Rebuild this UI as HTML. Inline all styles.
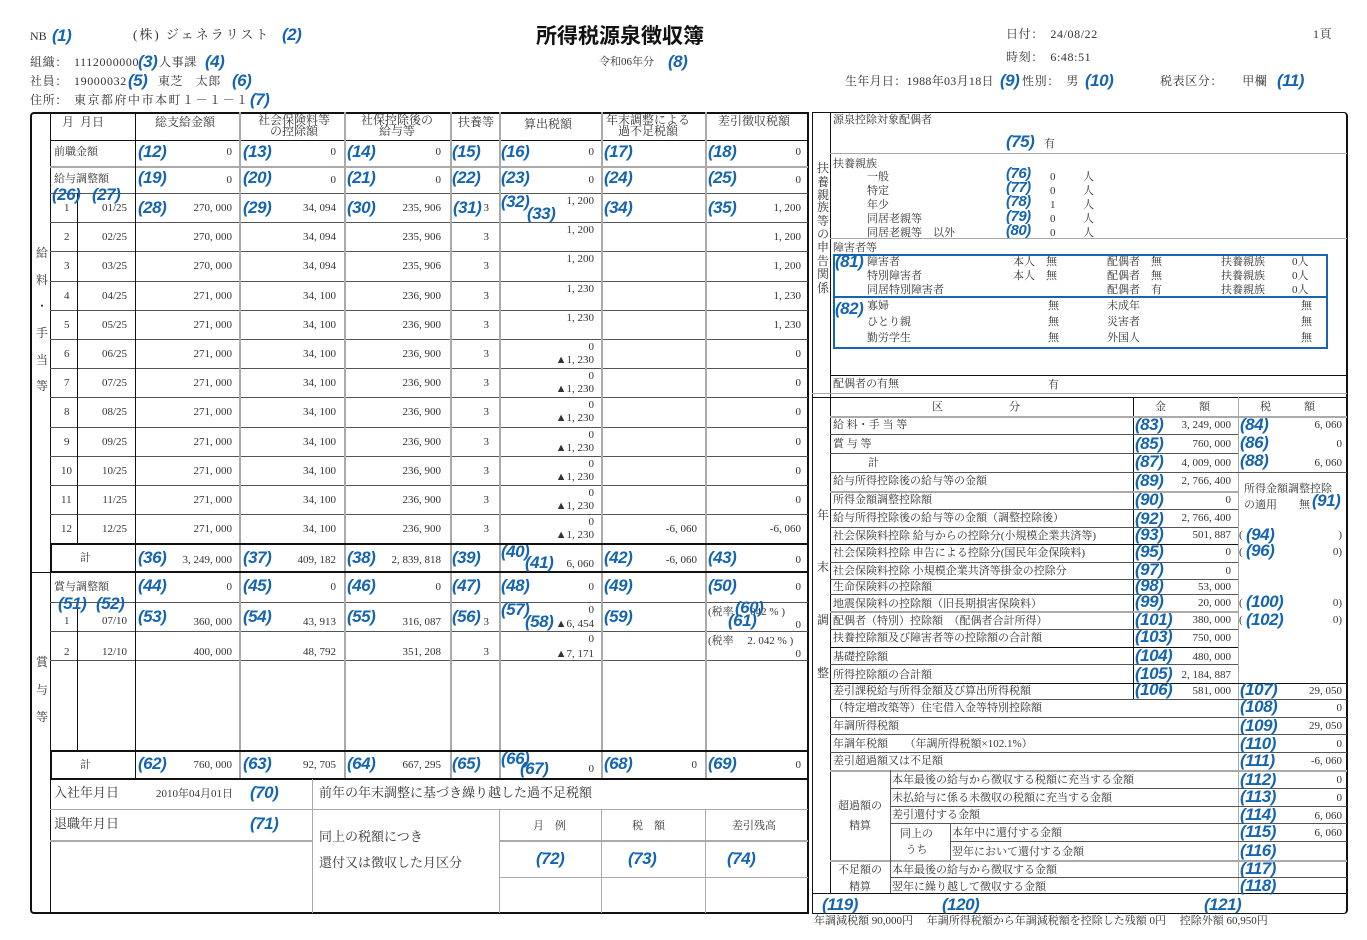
<!DOCTYPE html>
<html><head><meta charset="utf-8">
<style>
html,body{margin:0;padding:0;background:#fff}
body{width:1367px;height:940px;position:relative;overflow:hidden;font:11px/14px "Liberation Serif","Noto Serif CJK SC",serif;color:#333}
.a{position:absolute;white-space:nowrap;line-height:14px}
.b{position:absolute;white-space:nowrap;font:italic bold 17px/20px "Liberation Sans",sans-serif;color:#1565b0;letter-spacing:-0.5px}
.bs{font-size:15px;line-height:15px}
.h{position:absolute;height:1px;background:#555}
.v{position:absolute;width:1px;background:#555}
.g{background:#aaa}
.k{background:#111}
.row{position:absolute;left:0;width:1367px;height:29px}
.box{position:absolute;box-sizing:border-box}
.vt{position:absolute;width:14px;text-align:center;font-size:12px}
.hd{font-size:12px;letter-spacing:0.6px}
</style></head><body>

<!-- header -->
<span class="a" style="left:30px;top:29px;font-size:12px">NB</span><span class="b" style="left:52px;top:26px">(1)</span>
<span class="a" style="left:133px;top:28px;font-size:13px;letter-spacing:2px">(株) ジェネラリスト</span><span class="b" style="left:282px;top:25px">(2)</span>
<span class="a" style="left:536px;top:22px;font:bold 21px/26px 'Noto Sans CJK JP',sans-serif;color:#111">所得税源泉徴収簿</span>
<span class="a" style="left:599px;top:55px">令和06年分</span><span class="b" style="left:668px;top:52px">(8)</span>
<span class="a hd" style="left:1006px;top:27px">日付：　24/08/22</span>
<span class="a hd" style="left:1313px;top:27px">1頁</span>
<span class="a hd" style="left:1006px;top:50px">時刻：　6:48:51</span>
<span class="a hd" style="left:30px;top:55px">組織：</span><span class="a hd" style="left:74px;top:55px">1112000000</span><span class="b" style="left:138px;top:52px">(3)</span><span class="a hd" style="left:159px;top:55px">人事課</span><span class="b" style="left:205px;top:52px">(4)</span>
<span class="a hd" style="left:30px;top:74px">社員：</span><span class="a hd" style="left:74px;top:74px">19000032</span><span class="b" style="left:128px;top:71px">(5)</span><span class="a hd" style="left:158px;top:74px">東芝　太郎</span><span class="b" style="left:232px;top:71px">(6)</span>
<span class="a hd" style="left:30px;top:93px">住所：</span><span class="a hd" style="left:74px;top:93px;letter-spacing:1.5px">東京都府中市本町１－１－１</span><span class="b" style="left:250px;top:90px">(7)</span>
<span class="a hd" style="left:845px;top:74px;letter-spacing:0.3px">生年月日：1988年03月18日</span><span class="b" style="left:1000px;top:71px">(9)</span><span class="a hd" style="left:1022px;top:74px">性別：　男</span><span class="b" style="left:1085px;top:71px">(10)</span>
<span class="a hd" style="left:1160px;top:74px">税表区分：　　甲欄</span><span class="b" style="left:1277px;top:71px">(11)</span>

<!-- LEFT TABLE frame -->
<div class="box" style="left:30px;top:112px;width:779px;height:802px;border:2px solid #111;border-radius:4px 0 0 4px"></div>
<div class="v k" style="left:50px;top:112px;height:801px"></div>
<div class="h k" style="left:30px;top:572px;width:20px"></div>
<div class="h k" style="left:50px;top:140px;width:758px"></div>
<div class="h g" style="left:50px;top:166px;width:758px;height:2px"></div>
<div class="h" style="left:50px;top:193px;width:758px"></div>
<div class="h" style="left:50px;top:222px;width:758px"></div>
<div class="h" style="left:50px;top:251px;width:758px"></div>
<div class="h" style="left:50px;top:281px;width:758px"></div>
<div class="h" style="left:50px;top:310px;width:758px"></div>
<div class="h" style="left:50px;top:339px;width:758px"></div>
<div class="h" style="left:50px;top:368px;width:758px"></div>
<div class="h" style="left:50px;top:397px;width:758px"></div>
<div class="h" style="left:50px;top:427px;width:758px"></div>
<div class="h" style="left:50px;top:456px;width:758px"></div>
<div class="h" style="left:50px;top:485px;width:758px"></div>
<div class="h" style="left:50px;top:514px;width:758px"></div>
<div class="h" style="left:50px;top:602px;width:758px"></div>
<div class="h" style="left:50px;top:631px;width:758px"></div>
<div class="h" style="left:50px;top:660px;width:758px"></div>
<div class="v k" style="left:135px;top:112px;height:667px"></div>
<div class="v g" style="left:239px;top:112px;height:667px;width:2px"></div>
<div class="v g" style="left:344px;top:112px;height:667px;width:2px"></div>
<div class="v g" style="left:450px;top:112px;height:667px;width:2px"></div>
<div class="v g" style="left:499px;top:112px;height:667px;width:2px"></div>
<div class="v g" style="left:601px;top:112px;height:667px;width:2px"></div>
<div class="v g" style="left:705px;top:112px;height:667px;width:2px"></div>
<div class="v k" style="left:77px;top:193px;height:350px"></div>
<div class="v k" style="left:77px;top:602px;height:148px"></div>
<div class="box" style="left:50px;top:543px;width:759px;height:30px;border:2px solid #111"></div>
<div class="box" style="left:50px;top:750px;width:759px;height:30px;border:2px solid #111"></div>
<div class="h g" style="left:50px;top:809px;width:758px"></div>
<div class="h g" style="left:50px;top:840px;width:262px;height:2px"></div>
<div class="v g" style="left:312px;top:779px;height:134px"></div>
<div class="v g" style="left:499px;top:809px;height:104px"></div>
<div class="v g" style="left:601px;top:809px;height:104px"></div>
<div class="v g" style="left:705px;top:809px;height:104px"></div>
<div class="h g" style="left:499px;top:840px;width:309px;height:2px"></div>
<div class="h g" style="left:499px;top:877px;width:309px"></div>

<!-- vertical labels -->
<span class="vt" style="left:35px;top:246px">給</span>
<span class="vt" style="left:35px;top:273px">料</span>
<span class="vt" style="left:35px;top:299px">・</span>
<span class="vt" style="left:35px;top:326px">手</span>
<span class="vt" style="left:35px;top:353px">当</span>
<span class="vt" style="left:35px;top:379px">等</span>
<span class="vt" style="left:35px;top:655px">賞</span>
<span class="vt" style="left:35px;top:683px">与</span>
<span class="vt" style="left:35px;top:710px">等</span>

<!-- column headers -->
<span class="a" style="left:62px;top:115px;font-size:12px">月&nbsp; 月日</span>
<span class="a" style="left:155px;top:115px;font-size:12px">総支給金額</span>
<span class="a" style="left:258px;top:115px;font-size:12px;line-height:11px;text-align:center">社会保険料等<br>の控除額</span>
<span class="a" style="left:361px;top:115px;font-size:12px;line-height:11px;text-align:center">社保控除後の<br>給与等</span>
<span class="a" style="left:458px;top:115px;font-size:12px">扶養等</span>
<span class="a" style="left:524px;top:117px;font-size:12px">算出税額</span>
<span class="a" style="left:606px;top:115px;font-size:12px;line-height:11px;text-align:center">年末調整による<br>過不足税額</span>
<span class="a" style="left:718px;top:114px;font-size:12px">差引徴収税額</span>

<!-- 前職 / 給与調整 -->
<span class="a" style="left:54px;top:145px">前職金額</span>
<span class="b" style="left:138px;top:142px">(12)</span><span class="a" style="right:1135px;top:145px">0</span>
<span class="b" style="left:243px;top:142px">(13)</span><span class="a" style="right:1031px;top:145px">0</span>
<span class="b" style="left:347px;top:142px">(14)</span><span class="a" style="right:926px;top:145px">0</span>
<span class="b" style="left:452px;top:142px">(15)</span>
<span class="b" style="left:501px;top:142px">(16)</span><span class="a" style="right:773px;top:145px">0</span>
<span class="b" style="left:604px;top:142px">(17)</span>
<span class="b" style="left:708px;top:142px">(18)</span><span class="a" style="right:566px;top:145px">0</span>
<span class="a" style="left:54px;top:172px">給与調整額</span>
<span class="b" style="left:138px;top:168px">(19)</span><span class="a" style="right:1135px;top:173px">0</span>
<span class="b" style="left:243px;top:168px">(20)</span><span class="a" style="right:1031px;top:173px">0</span>
<span class="b" style="left:347px;top:168px">(21)</span><span class="a" style="right:926px;top:173px">0</span>
<span class="b" style="left:452px;top:168px">(22)</span>
<span class="b" style="left:501px;top:168px">(23)</span><span class="a" style="right:773px;top:173px">0</span>
<span class="b" style="left:604px;top:168px">(24)</span>
<span class="b" style="left:708px;top:168px">(25)</span><span class="a" style="right:566px;top:173px">0</span>

<!-- monthly rows -->
<div class="row" style="top:193px">
<span class="a" style="left:64px;top:8px">1</span><span class="a" style="right:1240px;top:8px">01/25</span>
<span class="a" style="right:1135px;top:8px">270, 000</span><span class="a" style="right:1031px;top:8px">34, 094</span><span class="a" style="right:926px;top:8px">235, 906</span><span class="a" style="right:878px;top:8px">3</span>
<span class="a" style="right:773px;top:1px">1, 200</span><span class="a" style="right:566px;top:8px">1, 200</span>
<span class="b" style="left:52px;top:-8px">(26)</span><span class="b" style="left:92px;top:-8px">(27)</span>
<span class="b" style="left:138px;top:5px">(28)</span><span class="b" style="left:243px;top:5px">(29)</span><span class="b" style="left:347px;top:5px">(30)</span><span class="b" style="left:453px;top:5px">(31)</span>
<span class="b" style="left:501px;top:-1px">(32)</span><span class="b" style="left:527px;top:11px">(33)</span><span class="b" style="left:604px;top:5px">(34)</span><span class="b" style="left:708px;top:5px">(35)</span>
</div>
<div class="row" style="top:222px">
<span class="a" style="left:64px;top:8px">2</span><span class="a" style="right:1240px;top:8px">02/25</span>
<span class="a" style="right:1135px;top:8px">270, 000</span><span class="a" style="right:1031px;top:8px">34, 094</span><span class="a" style="right:926px;top:8px">235, 906</span><span class="a" style="right:878px;top:8px">3</span>
<span class="a" style="right:773px;top:1px">1, 200</span><span class="a" style="right:566px;top:8px">1, 200</span></div>
<div class="row" style="top:251px">
<span class="a" style="left:64px;top:8px">3</span><span class="a" style="right:1240px;top:8px">03/25</span>
<span class="a" style="right:1135px;top:8px">270, 000</span><span class="a" style="right:1031px;top:8px">34, 094</span><span class="a" style="right:926px;top:8px">235, 906</span><span class="a" style="right:878px;top:8px">3</span>
<span class="a" style="right:773px;top:1px">1, 200</span><span class="a" style="right:566px;top:8px">1, 200</span></div>
<div class="row" style="top:281px">
<span class="a" style="left:64px;top:8px">4</span><span class="a" style="right:1240px;top:8px">04/25</span>
<span class="a" style="right:1135px;top:8px">271, 000</span><span class="a" style="right:1031px;top:8px">34, 100</span><span class="a" style="right:926px;top:8px">236, 900</span><span class="a" style="right:878px;top:8px">3</span>
<span class="a" style="right:773px;top:1px">1, 230</span><span class="a" style="right:566px;top:8px">1, 230</span></div>
<div class="row" style="top:310px">
<span class="a" style="left:64px;top:8px">5</span><span class="a" style="right:1240px;top:8px">05/25</span>
<span class="a" style="right:1135px;top:8px">271, 000</span><span class="a" style="right:1031px;top:8px">34, 100</span><span class="a" style="right:926px;top:8px">236, 900</span><span class="a" style="right:878px;top:8px">3</span>
<span class="a" style="right:773px;top:1px">1, 230</span><span class="a" style="right:566px;top:8px">1, 230</span></div>
<div class="row" style="top:339px">
<span class="a" style="left:64px;top:8px">6</span><span class="a" style="right:1240px;top:8px">06/25</span>
<span class="a" style="right:1135px;top:8px">271, 000</span><span class="a" style="right:1031px;top:8px">34, 100</span><span class="a" style="right:926px;top:8px">236, 900</span><span class="a" style="right:878px;top:8px">3</span>
<span class="a" style="right:773px;top:1px">0</span><span class="a" style="right:773px;top:14px">▲1, 230</span><span class="a" style="right:566px;top:8px">0</span></div>
<div class="row" style="top:368px">
<span class="a" style="left:64px;top:8px">7</span><span class="a" style="right:1240px;top:8px">07/25</span>
<span class="a" style="right:1135px;top:8px">271, 000</span><span class="a" style="right:1031px;top:8px">34, 100</span><span class="a" style="right:926px;top:8px">236, 900</span><span class="a" style="right:878px;top:8px">3</span>
<span class="a" style="right:773px;top:1px">0</span><span class="a" style="right:773px;top:14px">▲1, 230</span><span class="a" style="right:566px;top:8px">0</span></div>
<div class="row" style="top:397px">
<span class="a" style="left:64px;top:8px">8</span><span class="a" style="right:1240px;top:8px">08/25</span>
<span class="a" style="right:1135px;top:8px">271, 000</span><span class="a" style="right:1031px;top:8px">34, 100</span><span class="a" style="right:926px;top:8px">236, 900</span><span class="a" style="right:878px;top:8px">3</span>
<span class="a" style="right:773px;top:1px">0</span><span class="a" style="right:773px;top:14px">▲1, 230</span><span class="a" style="right:566px;top:8px">0</span></div>
<div class="row" style="top:427px">
<span class="a" style="left:64px;top:8px">9</span><span class="a" style="right:1240px;top:8px">09/25</span>
<span class="a" style="right:1135px;top:8px">271, 000</span><span class="a" style="right:1031px;top:8px">34, 100</span><span class="a" style="right:926px;top:8px">236, 900</span><span class="a" style="right:878px;top:8px">3</span>
<span class="a" style="right:773px;top:1px">0</span><span class="a" style="right:773px;top:14px">▲1, 230</span><span class="a" style="right:566px;top:8px">0</span></div>
<div class="row" style="top:456px">
<span class="a" style="left:61px;top:8px">10</span><span class="a" style="right:1240px;top:8px">10/25</span>
<span class="a" style="right:1135px;top:8px">271, 000</span><span class="a" style="right:1031px;top:8px">34, 100</span><span class="a" style="right:926px;top:8px">236, 900</span><span class="a" style="right:878px;top:8px">3</span>
<span class="a" style="right:773px;top:1px">0</span><span class="a" style="right:773px;top:14px">▲1, 230</span><span class="a" style="right:566px;top:8px">0</span></div>
<div class="row" style="top:485px">
<span class="a" style="left:61px;top:8px">11</span><span class="a" style="right:1240px;top:8px">11/25</span>
<span class="a" style="right:1135px;top:8px">271, 000</span><span class="a" style="right:1031px;top:8px">34, 100</span><span class="a" style="right:926px;top:8px">236, 900</span><span class="a" style="right:878px;top:8px">3</span>
<span class="a" style="right:773px;top:1px">0</span><span class="a" style="right:773px;top:14px">▲1, 230</span><span class="a" style="right:566px;top:8px">0</span></div>
<div class="row" style="top:514px">
<span class="a" style="left:61px;top:8px">12</span><span class="a" style="right:1240px;top:8px">12/25</span>
<span class="a" style="right:1135px;top:8px">271, 000</span><span class="a" style="right:1031px;top:8px">34, 100</span><span class="a" style="right:926px;top:8px">236, 900</span><span class="a" style="right:878px;top:8px">3</span>
<span class="a" style="right:773px;top:1px">0</span><span class="a" style="right:773px;top:14px">▲1, 230</span><span class="a" style="right:670px;top:8px">-6, 060</span><span class="a" style="right:566px;top:8px">-6, 060</span></div>

<!-- 計 -->
<span class="a" style="left:80px;top:551px">計</span>
<span class="b" style="left:138px;top:548px">(36)</span><span class="a" style="right:1135px;top:553px">3, 249, 000</span>
<span class="b" style="left:243px;top:548px">(37)</span><span class="a" style="right:1031px;top:553px">409, 182</span>
<span class="b" style="left:347px;top:548px">(38)</span><span class="a" style="right:926px;top:553px">2, 839, 818</span>
<span class="b" style="left:452px;top:548px">(39)</span>
<span class="b" style="left:501px;top:542px">(40)</span><span class="b" style="left:525px;top:553px">(41)</span><span class="a" style="right:773px;top:557px">6, 060</span>
<span class="b" style="left:604px;top:548px">(42)</span><span class="a" style="right:670px;top:553px">-6, 060</span>
<span class="b" style="left:708px;top:548px">(43)</span><span class="a" style="right:566px;top:553px">0</span>

<!-- 賞与 -->
<span class="a" style="left:54px;top:580px">賞与調整額</span>
<span class="b" style="left:138px;top:576px">(44)</span><span class="a" style="right:1135px;top:580px">0</span>
<span class="b" style="left:243px;top:576px">(45)</span><span class="a" style="right:1031px;top:580px">0</span>
<span class="b" style="left:347px;top:576px">(46)</span><span class="a" style="right:926px;top:580px">0</span>
<span class="b" style="left:452px;top:576px">(47)</span>
<span class="b" style="left:501px;top:576px">(48)</span><span class="a" style="right:773px;top:580px">0</span>
<span class="b" style="left:604px;top:576px">(49)</span>
<span class="b" style="left:708px;top:576px">(50)</span><span class="a" style="right:566px;top:580px">0</span>
<span class="b" style="left:58px;top:594px">(51)</span><span class="b" style="left:96px;top:594px">(52)</span>
<span class="a" style="left:64px;top:614px">1</span><span class="a" style="right:1240px;top:614px">07/10</span>
<span class="b" style="left:138px;top:607px">(53)</span><span class="a" style="right:1135px;top:615px">360, 000</span>
<span class="b" style="left:243px;top:607px">(54)</span><span class="a" style="right:1031px;top:615px">43, 913</span>
<span class="b" style="left:347px;top:607px">(55)</span><span class="a" style="right:926px;top:615px">316, 087</span>
<span class="b" style="left:452px;top:607px">(56)</span><span class="a" style="right:878px;top:615px">3</span>
<span class="b" style="left:501px;top:600px">(57)</span><span class="b" style="left:525px;top:612px">(58)</span><span class="a" style="right:773px;top:603px">0</span><span class="a" style="right:773px;top:617px">▲6, 454</span>
<span class="b" style="left:604px;top:607px">(59)</span>
<span class="a" style="left:708px;top:605px">(税率&nbsp;&nbsp;&nbsp;&nbsp;&nbsp;&nbsp;042 % )</span><span class="b" style="left:735px;top:598px">(60)</span><span class="b" style="left:728px;top:611px">(61)</span><span class="a" style="right:566px;top:618px">0</span>
<span class="a" style="left:64px;top:645px">2</span><span class="a" style="right:1240px;top:645px">12/10</span>
<span class="a" style="right:1135px;top:645px">400, 000</span><span class="a" style="right:1031px;top:645px">48, 792</span><span class="a" style="right:926px;top:645px">351, 208</span><span class="a" style="right:878px;top:645px">3</span>
<span class="a" style="right:773px;top:632px">0</span><span class="a" style="right:773px;top:647px">▲7, 171</span>
<span class="a" style="left:708px;top:634px">(税率　 2. 042 % )</span><span class="a" style="right:566px;top:647px">0</span>

<!-- 賞与計 -->
<span class="a" style="left:80px;top:758px">計</span>
<span class="b" style="left:138px;top:754px">(62)</span><span class="a" style="right:1135px;top:758px">760, 000</span>
<span class="b" style="left:243px;top:754px">(63)</span><span class="a" style="right:1031px;top:758px">92, 705</span>
<span class="b" style="left:347px;top:754px">(64)</span><span class="a" style="right:926px;top:758px">667, 295</span>
<span class="b" style="left:452px;top:754px">(65)</span>
<span class="b" style="left:501px;top:749px">(66)</span><span class="b" style="left:520px;top:759px">(67)</span><span class="a" style="right:773px;top:762px">0</span>
<span class="b" style="left:604px;top:754px">(68)</span><span class="a" style="right:670px;top:758px">0</span>
<span class="b" style="left:708px;top:754px">(69)</span><span class="a" style="right:566px;top:758px">0</span>

<!-- bottom left -->
<span class="a" style="left:54px;top:786px;font-size:13px">入社年月日</span><span class="a" style="left:156px;top:787px">2010年04月01日</span><span class="b" style="left:250px;top:783px">(70)</span>
<span class="a" style="left:319px;top:786px;font-size:13px">前年の年末調整に基づき繰り越した過不足税額</span>
<span class="a" style="left:54px;top:817px;font-size:13px">退職年月日</span><span class="b" style="left:250px;top:814px">(71)</span>
<span class="a" style="left:319px;top:830px;font-size:13px">同上の税額につき</span>
<span class="a" style="left:319px;top:856px;font-size:13px">還付又は徴収した月区分</span>
<span class="a" style="left:533px;top:819px">月　例</span>
<span class="a" style="left:632px;top:819px">税　額</span>
<span class="a" style="left:732px;top:819px">差引残高</span>
<span class="b" style="left:536px;top:849px">(72)</span><span class="b" style="left:628px;top:849px">(73)</span><span class="b" style="left:727px;top:849px">(74)</span>

<!-- RIGHT PANEL -->
<div class="box" style="left:812px;top:112px;width:536px;height:802px;border:1px solid #111;border-right-width:2px;border-radius:0 4px 4px 0"></div>
<div class="v k" style="left:830px;top:112px;height:781px"></div>
<div class="h g" style="left:830px;top:153px;width:517px"></div>
<div class="h g" style="left:830px;top:238px;width:517px"></div>
<div class="h k" style="left:830px;top:375px;width:517px"></div>
<div class="h g" style="left:812px;top:393px;width:535px"></div>
<div class="h k" style="left:812px;top:397px;width:535px"></div>

<span class="vt" style="left:816px;top:161px">扶</span><span class="vt" style="left:816px;top:175px">養</span><span class="vt" style="left:816px;top:188px">親</span><span class="vt" style="left:816px;top:200px">族</span><span class="vt" style="left:816px;top:214px">等</span><span class="vt" style="left:816px;top:227px">の</span><span class="vt" style="left:816px;top:240px">申</span><span class="vt" style="left:816px;top:254px">告</span><span class="vt" style="left:816px;top:267px">関</span><span class="vt" style="left:816px;top:281px">係</span>

<span class="a" style="left:833px;top:113px">源泉控除対象配偶者</span>
<span class="b" style="left:1006px;top:132px">(75)</span><span class="a" style="left:1044px;top:137px">有</span>
<span class="a" style="left:833px;top:157px">扶養親族</span>
<span class="a" style="left:867px;top:170px;line-height:14px">一般<br>特定<br>年少<br>同居老親等<br>同居老親等　以外</span>
<span class="a" style="left:1050px;top:170px;line-height:14px">0<br>0<br>1<br>0<br>0</span>
<span class="a" style="left:1083px;top:170px;line-height:14px">人<br>人<br>人<br>人<br>人</span>
<span class="b bs" style="left:1006px;top:166px">(76)</span><span class="b bs" style="left:1006px;top:180px">(77)</span><span class="b bs" style="left:1006px;top:194px">(78)</span><span class="b bs" style="left:1006px;top:209px">(79)</span><span class="b bs" style="left:1006px;top:223px">(80)</span>
<span class="a" style="left:833px;top:241px">障害者等</span>
<div class="box" style="left:833px;top:254px;width:495px;height:44px;border:2px solid #1565b0"></div>
<div class="box" style="left:833px;top:296px;width:495px;height:53px;border:2px solid #1565b0"></div>
<span class="b" style="left:835px;top:252px">(81)</span><span class="b" style="left:835px;top:299px">(82)</span>
<span class="a" style="left:867px;top:255px;line-height:14px">障害者<br>特別障害者<br>同居特別障害者</span>
<span class="a" style="left:1013px;top:255px;line-height:14px">本人　無<br>本人　無</span>
<span class="a" style="left:1107px;top:255px;line-height:14px">配偶者　無<br>配偶者　無<br>配偶者　有</span>
<span class="a" style="left:1221px;top:255px;line-height:14px">扶養親族<br>扶養親族<br>扶養親族</span>
<span class="a" style="left:1292px;top:255px;line-height:14px">0人<br>0人<br>0人</span>
<span class="a" style="left:867px;top:298px;line-height:16px">寡婦<br>ひとり親<br>勤労学生</span>
<span class="a" style="left:1048px;top:298px;line-height:16px">無<br>無<br>無</span>
<span class="a" style="left:1107px;top:298px;line-height:16px">未成年<br>災害者<br>外国人</span>
<span class="a" style="left:1301px;top:298px;line-height:16px">無<br>無<br>無</span>
<span class="a" style="left:833px;top:377px">配偶者の有無</span><span class="a" style="left:1048px;top:378px">有</span>

<!-- year-end table lines -->
<div class="v k" style="left:1133px;top:397px;height:302px"></div>
<div class="v g" style="left:1238px;top:397px;height:496px"></div>
<div class="h g" style="left:830px;top:416px;width:517px;height:2px"></div>
<div class="h" style="left:830px;top:434px;width:408px"></div>
<div class="h" style="left:830px;top:453px;width:408px"></div>
<div class="h" style="left:830px;top:472px;width:517px"></div>
<div class="h g" style="left:830px;top:491px;width:408px;height:2px"></div>
<div class="h" style="left:830px;top:509px;width:408px"></div>
<div class="h" style="left:830px;top:527px;width:408px"></div>
<div class="h k" style="left:830px;top:544px;width:408px"></div>
<div class="h" style="left:830px;top:562px;width:408px"></div>
<div class="h" style="left:830px;top:579px;width:408px"></div>
<div class="h" style="left:830px;top:594px;width:408px"></div>
<div class="h g" style="left:830px;top:611px;width:408px;height:2px"></div>
<div class="h" style="left:830px;top:629px;width:408px"></div>
<div class="h k" style="left:830px;top:647px;width:408px"></div>
<div class="h" style="left:830px;top:664px;width:408px"></div>
<div class="h k" style="left:830px;top:683px;width:517px"></div>
<div class="h" style="left:830px;top:699px;width:517px"></div>
<div class="h" style="left:830px;top:717px;width:517px"></div>
<div class="h" style="left:830px;top:734px;width:517px"></div>
<div class="h" style="left:830px;top:752px;width:517px"></div>
<div class="h g" style="left:830px;top:770px;width:517px;height:2px"></div>
<div class="h" style="left:890px;top:788px;width:457px"></div>
<div class="h" style="left:890px;top:806px;width:457px"></div>
<div class="h" style="left:890px;top:823px;width:457px"></div>
<div class="h" style="left:950px;top:841px;width:397px"></div>
<div class="h g" style="left:830px;top:860px;width:517px;height:2px"></div>
<div class="h" style="left:890px;top:877px;width:457px"></div>
<div class="h k" style="left:812px;top:893px;width:535px"></div>
<div class="v" style="left:890px;top:770px;height:123px"></div>
<div class="v" style="left:950px;top:823px;height:37px"></div>

<span class="vt" style="left:816px;top:508px">年</span><span class="vt" style="left:816px;top:560px">末</span><span class="vt" style="left:816px;top:613px">調</span><span class="vt" style="left:816px;top:666px">整</span>

<span class="a" style="left:932px;top:400px">区　　　　　　分</span>
<span class="a" style="left:1155px;top:400px">金　　　額</span>
<span class="a" style="left:1260px;top:400px">税　　　額</span>

<span class="a" style="left:833px;top:418px">給 料・手 当 等</span>
<span class="a" style="left:833px;top:437px">賞 与 等</span>
<span class="a" style="left:868px;top:456px">計</span>
<span class="a" style="left:833px;top:474px">給与所得控除後の給与等の金額</span>
<span class="a" style="left:833px;top:493px">所得金額調整控除額</span>
<span class="a" style="left:833px;top:511px">給与所得控除後の給与等の金額（調整控除後）</span>
<span class="a" style="left:833px;top:529px">社会保険料控除 給与からの控除分(小規模企業共済等)</span>
<span class="a" style="left:833px;top:546px">社会保険料控除 申告による控除分(国民年金保険料)</span>
<span class="a" style="left:833px;top:564px">社会保険料控除 小規模企業共済等掛金の控除分</span>
<span class="a" style="left:833px;top:580px">生命保険料の控除額</span>
<span class="a" style="left:833px;top:597px">地震保険料の控除額（旧長期損害保険料）</span>
<span class="a" style="left:833px;top:614px">配偶者（特別）控除額　（配偶者合計所得）</span>
<span class="a" style="left:833px;top:631px">扶養控除額及び障害者等の控除額の合計額</span>
<span class="a" style="left:833px;top:650px">基礎控除額</span>
<span class="a" style="left:833px;top:668px">所得控除額の合計額</span>
<span class="a" style="left:833px;top:684px">差引課税給与所得金額及び算出所得税額</span>
<span class="a" style="left:833px;top:701px">（特定増改築等）住宅借入金等特別控除額</span>
<span class="a" style="left:833px;top:719px">年調所得税額</span>
<span class="a" style="left:833px;top:737px">年調年税額　　（年調所得税額×102.1%）</span>
<span class="a" style="left:833px;top:754px">差引超過額又は不足額</span>
<span class="a" style="left:838px;top:796px;line-height:20px;text-align:center">超過額の<br>精算</span>
<span class="a" style="left:900px;top:826px;line-height:16px;text-align:center">同上の<br>うち</span>
<span class="a" style="left:838px;top:862px;line-height:17px;text-align:center">不足額の<br>精算</span>
<span class="a" style="left:892px;top:773px">本年最後の給与から徴収する税額に充当する金額</span>
<span class="a" style="left:892px;top:791px">未払給与に係る未徴収の税額に充当する金額</span>
<span class="a" style="left:892px;top:808px">差引還付する金額</span>
<span class="a" style="left:952px;top:826px">本年中に還付する金額</span>
<span class="a" style="left:952px;top:845px">翌年において還付する金額</span>
<span class="a" style="left:892px;top:863px">本年最後の給与から徴収する金額</span>
<span class="a" style="left:892px;top:880px">翌年に繰り越して徴収する金額</span>

<span class="a" style="left:1244px;top:481px;line-height:16px">所得金額調整控除<br>の適用　　無</span><span class="b" style="left:1312px;top:491px">(91)</span>

<!-- amounts -->
<span class="b" style="left:1135px;top:415px">(83)</span><span class="a" style="right:136px;top:418px">3, 249, 000</span><span class="b" style="left:1240px;top:415px">(84)</span><span class="a" style="right:25px;top:418px">6, 060</span>
<span class="b" style="left:1135px;top:434px">(85)</span><span class="a" style="right:136px;top:437px">760, 000</span><span class="b" style="left:1240px;top:433px">(86)</span><span class="a" style="right:25px;top:437px">0</span>
<span class="b" style="left:1135px;top:452px">(87)</span><span class="a" style="right:136px;top:456px">4, 009, 000</span><span class="b" style="left:1240px;top:451px">(88)</span><span class="a" style="right:25px;top:456px">6, 060</span>
<span class="b" style="left:1135px;top:471px">(89)</span><span class="a" style="right:136px;top:474px">2, 766, 400</span>
<span class="b" style="left:1135px;top:490px">(90)</span><span class="a" style="right:136px;top:493px">0</span>
<span class="b" style="left:1135px;top:509px">(92)</span><span class="a" style="right:136px;top:511px">2, 766, 400</span>
<span class="b" style="left:1135px;top:525px">(93)</span><span class="a" style="right:136px;top:528px">501, 887</span><span class="a" style="left:1239px;top:528px">(</span><span class="b" style="left:1246px;top:525px">(94)</span><span class="a" style="right:25px;top:528px">)</span>
<span class="b" style="left:1135px;top:542px">(95)</span><span class="a" style="right:136px;top:545px">0</span><span class="a" style="left:1239px;top:545px">(</span><span class="b" style="left:1246px;top:541px">(96)</span><span class="a" style="right:25px;top:545px">0)</span>
<span class="b" style="left:1135px;top:560px">(97)</span><span class="a" style="right:136px;top:564px">0</span>
<span class="b" style="left:1135px;top:576px">(98)</span><span class="a" style="right:136px;top:580px">53, 000</span>
<span class="b" style="left:1135px;top:592px">(99)</span><span class="a" style="right:136px;top:596px">20, 000</span><span class="a" style="left:1239px;top:596px">(</span><span class="b" style="left:1246px;top:592px">(100)</span><span class="a" style="right:25px;top:596px">0)</span>
<span class="b" style="left:1135px;top:610px">(101)</span><span class="a" style="right:136px;top:613px">380, 000</span><span class="a" style="left:1239px;top:613px">(</span><span class="b" style="left:1246px;top:610px">(102)</span><span class="a" style="right:25px;top:613px">0)</span>
<span class="b" style="left:1135px;top:627px">(103)</span><span class="a" style="right:136px;top:631px">750, 000</span>
<span class="b" style="left:1135px;top:646px">(104)</span><span class="a" style="right:136px;top:650px">480, 000</span>
<span class="b" style="left:1135px;top:664px">(105)</span><span class="a" style="right:136px;top:668px">2, 184, 887</span>
<span class="b" style="left:1135px;top:680px">(106)</span><span class="a" style="right:136px;top:684px">581, 000</span><span class="b" style="left:1240px;top:680px">(107)</span><span class="a" style="right:25px;top:684px">29, 050</span>
<span class="b" style="left:1240px;top:697px">(108)</span><span class="a" style="right:25px;top:701px">0</span>
<span class="b" style="left:1240px;top:716px">(109)</span><span class="a" style="right:25px;top:719px">29, 050</span>
<span class="b" style="left:1240px;top:734px">(110)</span><span class="a" style="right:25px;top:737px">0</span>
<span class="b" style="left:1240px;top:751px">(111)</span><span class="a" style="right:25px;top:754px">-6, 060</span>
<span class="b" style="left:1240px;top:770px">(112)</span><span class="a" style="right:25px;top:773px">0</span>
<span class="b" style="left:1240px;top:787px">(113)</span><span class="a" style="right:25px;top:791px">0</span>
<span class="b" style="left:1240px;top:805px">(114)</span><span class="a" style="right:25px;top:809px">6, 060</span>
<span class="b" style="left:1240px;top:822px">(115)</span><span class="a" style="right:25px;top:826px">6, 060</span>
<span class="b" style="left:1240px;top:841px">(116)</span>
<span class="b" style="left:1240px;top:859px">(117)</span>
<span class="b" style="left:1240px;top:876px">(118)</span>
<span class="b" style="left:822px;top:895px">(119)</span><span class="b" style="left:942px;top:895px">(120)</span><span class="b" style="left:1204px;top:895px">(121)</span>
<span class="a" style="left:814px;top:914px">年調減税額 90,000円　 年調所得税額から年調減税額を控除した残額 0円　 控除外額 60,950円</span>

</body></html>
